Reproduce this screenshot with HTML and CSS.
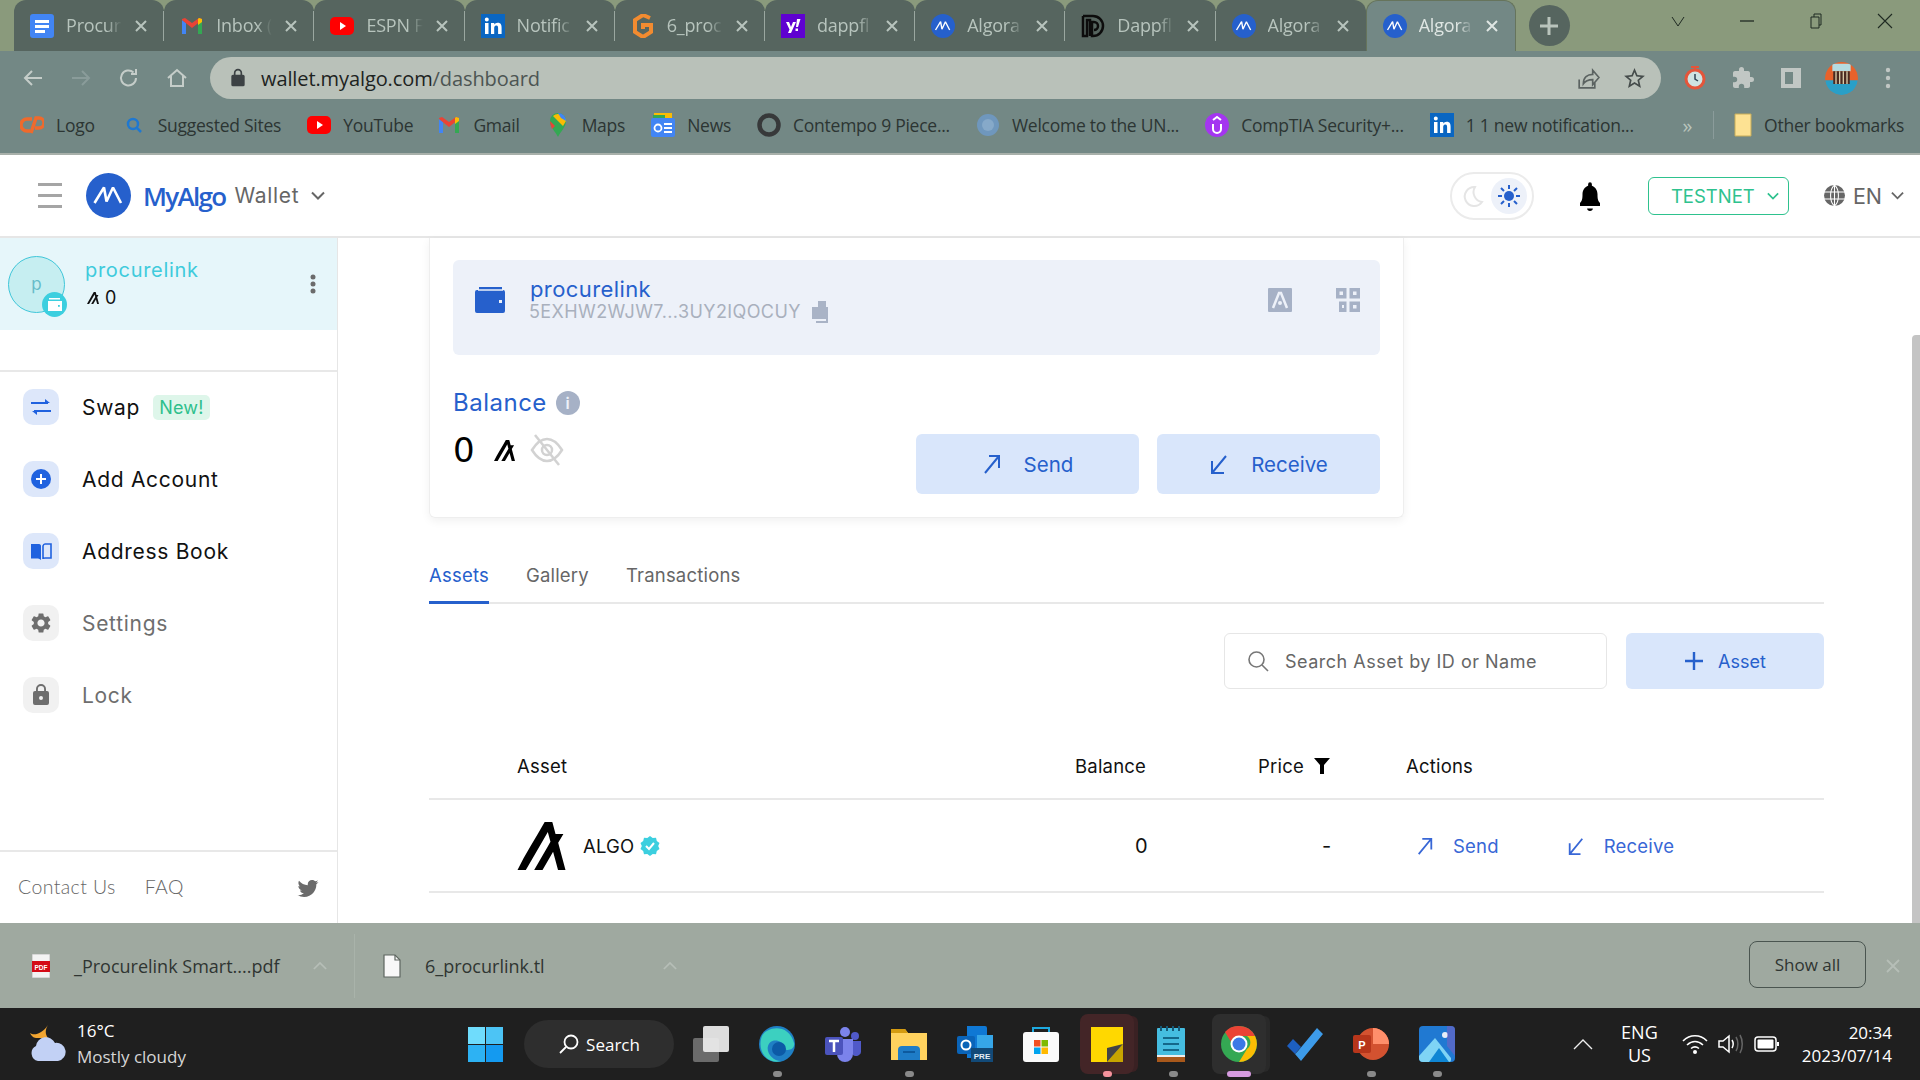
FILE: index.html
```html
<!DOCTYPE html>
<html lang="en">
<head>
<meta charset="utf-8">
<title>MyAlgo Wallet</title>
<link rel="stylesheet" href="styles.css">
</head>
<body>
<svg class="defs" width="0" height="0" aria-hidden="true">
  <symbol id="m" viewBox="0 0 45 45"><circle cx="22.5" cy="22.5" r="22.5" fill="#2660cc"/><path d="M8.500 30 18 14.500 20.500 28.500 27 14.500 35 30" fill="none" stroke="#fff" stroke-width="2.600" stroke-linejoin="bevel"/></symbol>
  <symbol id="algo" viewBox="0 0 113 113"><path d="M19.6 113 36 84.6 52.4 56.3 68.7 28l2.7-4.5L72.6 28l5 18.6-5.6 9.7-16.4 28.3L39.3 113h19.6l16.4-28.4 8.5-14.7 4 14.7L95.4 113H113l-7.6-28.4-7.6-28.3-2-7.3L108 28.1H89.5l-.6-2.1-6.4-24L81.7 0H64l-.4.6L47 29.3 30.2 57.9 13.9 86.2 0 113z" fill="currentColor"/></symbol>
  <symbol id="gmail" viewBox="0 0 24 24"><path d="M2 20V6l4 3v11z" fill="#4285f4"/><path d="M22 20V6l-4 3v11z" fill="#34a853"/><path d="M2 6 12 14 22 6v-1l-3-1-7 5-7-5-3 1z" fill="#ea4335"/><path d="M19 4l3 1v3l-4 3V5z" fill="#fbbc04"/></symbol>
  <symbol id="yt" viewBox="0 0 24 24"><rect y="3" width="24" height="18" rx="5" fill="#f00"/><path d="M10 8l6 4-6 4z" fill="#fff"/></symbol>
  <symbol id="li" viewBox="0 0 24 24"><rect width="24" height="24" fill="#0a66c2"/><path d="M4 9h3.5v11H4zM5.8 3.6a2 2 0 1 1 0 4 2 2 0 0 1 0-4zM10 9h3.3v1.6c.6-1 1.8-1.9 3.4-1.9 3.3 0 3.9 2.2 3.9 5V20h-3.5v-5.5c0-1.3 0-2.9-1.8-2.9s-2.1 1.4-2.1 2.8V20H10z" fill="#fff"/></symbol>
  <symbol id="close" viewBox="0 0 14 14"><path d="M2 2l10 10M12 2 2 12" fill="none" stroke="currentColor" stroke-width="2"/></symbol>
  <symbol id="chev" viewBox="0 0 14 9"><path d="M1 1.500l6 6 6-6" fill="none" stroke="currentColor" stroke-width="2"/></symbol>
  <symbol id="out" viewBox="0 0 20 22"><path d="M3 20 17 3M7 3h10v12" fill="none" stroke="currentColor" stroke-width="2"/></symbol>
  <symbol id="in" viewBox="0 0 20 22"><path d="M17 3 3 20M3 8v12h12" fill="none" stroke="currentColor" stroke-width="2"/></symbol>
</svg>

<div class="screen">
  <header class="tabstrip">
    <div class="tab"><svg class="fav" viewBox="0 0 24 24"><rect y="0" width="24" height="24" rx="3" fill="#4285f4"/><path d="M5 6h14v3H5zM5 11h14v3H5zM5 16h10v3H5z" fill="#fff"/></svg><span class="tab-title">Procur</span><svg class="tab-x"><use href="#close"/></svg></div>
    <div class="tab"><svg class="fav"><use href="#gmail"/></svg><span class="tab-title">Inbox (</span><svg class="tab-x"><use href="#close"/></svg></div>
    <div class="tab"><svg class="fav"><use href="#yt"/></svg><span class="tab-title">ESPN F</span><svg class="tab-x"><use href="#close"/></svg></div>
    <div class="tab"><svg class="fav"><use href="#li"/></svg><span class="tab-title">Notific</span><svg class="tab-x"><use href="#close"/></svg></div>
    <div class="tab"><svg class="fav" viewBox="0 0 24 24"><path d="M19 4 12 1 4 6v12l8 5 8-5v-7h-8v4" fill="none" stroke="#f28b30" stroke-width="4"/></svg><span class="tab-title">6_proc</span><svg class="tab-x"><use href="#close"/></svg></div>
    <div class="tab"><svg class="fav" viewBox="0 0 24 24"><rect width="24" height="24" fill="#5f01d1"/><path d="M5 8h3l2 5 2-5h3l-5 11H7l1.500-3.500zM16 5h3.500L17 13h-2zM14.500 14.500h2.500V17h-2.500z" fill="#fff"/></svg><span class="tab-title">dappfl</span><svg class="tab-x"><use href="#close"/></svg></div>
    <div class="tab"><svg class="fav"><use href="#m"/></svg><span class="tab-title">Algora</span><svg class="tab-x"><use href="#close"/></svg></div>
    <div class="tab"><svg class="fav" viewBox="0 0 24 24"><path d="M2 2h10a10 10 0 0 1 0 20h-1V8h2a4 4 0 0 1 0 8M2 2v20h4V6h3v16" fill="none" stroke="#0c0c0c" stroke-width="2.500"/></svg><span class="tab-title">Dappfl</span><svg class="tab-x"><use href="#close"/></svg></div>
    <div class="tab"><svg class="fav"><use href="#m"/></svg><span class="tab-title">Algora</span><svg class="tab-x"><use href="#close"/></svg></div>
    <div class="tab tab-active"><svg class="fav"><use href="#m"/></svg><span class="tab-title">Algora</span><svg class="tab-x"><use href="#close"/></svg></div>
    <div class="newtab"><svg width="20" height="20" viewBox="0 0 20 20"><path d="M10 1v18M1 10h18" stroke="#b9c4bc" stroke-width="3"/></svg></div>
    <div class="winctl">
      <svg class="wc" viewBox="0 0 16 16"><path d="M2 4l6 9 6-9" fill="none" stroke="#1f2a22" stroke-width="1"/></svg>
      <svg class="wc" viewBox="0 0 16 16"><path d="M1 8h14" stroke="#1f2a22" stroke-width="1.300"/></svg>
      <svg class="wc" viewBox="0 0 16 16"><path d="M3 4h8v11H3zM6 4V1h7v11h-2" fill="none" stroke="#1f2a22" stroke-width="1"/></svg>
      <svg class="wc" viewBox="0 0 16 16"><path d="M1 1l14 14M15 1 1 15" stroke="#1f2a22" stroke-width="1.100"/></svg>
    </div>
  </header>

  <div class="toolbar">
    <svg class="nav-ic" viewBox="0 0 24 24"><path d="M21 12H4M11 5l-7 7 7 7" fill="none" stroke="#c5cdc9" stroke-width="2"/></svg>
    <svg class="nav-ic" viewBox="0 0 24 24"><path d="M3 12h17M13 5l7 7-7 7" fill="none" stroke="#8a9c9a" stroke-width="2"/></svg>
    <svg class="nav-ic" viewBox="0 0 24 24"><path d="M19 12a7.500 7.500 0 1 1-2.500-5.600M19 3v5h-5" fill="none" stroke="#c5cdc9" stroke-width="2"/></svg>
    <svg class="nav-ic" viewBox="0 0 24 24"><path d="M3 12l9-8 9 8M6 10v10h12V10" fill="none" stroke="#c5cdc9" stroke-width="2"/></svg>
    <div class="omnibox">
      <svg class="lock" viewBox="0 0 24 24"><path d="M18 8h-1V6A5 5 0 0 0 7 6v2H6a2 2 0 0 0-2 2v10a2 2 0 0 0 2 2h12a2 2 0 0 0 2-2V10a2 2 0 0 0-2-2zM15 8H9V6a3 3 0 0 1 6 0z" fill="#3c4244"/></svg>
      <span class="url">wallet.myalgo.com<span class="url-path">/dashboard</span></span>
      <svg class="omni-ic" viewBox="0 0 24 24"><path d="M4 13v8h15v-5M8 17c0-6 4-9 9-9V4l6 7-6 7v-5c-4 0-7 1-9 4z" fill="none" stroke="#5b6361" stroke-width="1.600"/></svg>
      <svg class="omni-ic" viewBox="0 0 24 24"><path d="M22 9.240l-7.190-.620L12 2 9.190 8.630 2 9.240l5.460 4.730L5.820 21 12 17.270 18.180 21l-1.630-7.030L22 9.240zM12 15.400l-3.760 2.270 1-4.280-3.320-2.880 4.380-.380L12 6.100l1.710 4.040 4.380.380-3.320 2.880 1 4.280L12 15.400z" fill="#454c4b"/></svg>
    </div>
    <div class="ext-row">
      <svg class="ext" viewBox="0 0 24 24"><circle cx="12" cy="13" r="9" fill="#cfe3e2" stroke="#e4553a" stroke-width="3"/><path d="M12 1v3M8 1h8" stroke="#e4553a" stroke-width="2"/><path d="M12 8v5l3 2" fill="none" stroke="#345" stroke-width="1.500"/></svg>
      <svg class="ext" viewBox="0 0 24 24"><path d="M20.500 11H19V7c0-1.100-.9-2-2-2h-4V3.500a2.500 2.500 0 0 0-5 0V5H4c-1.100 0-2 .9-2 2v3.800h1.500a2.700 2.700 0 0 1 0 5.400H2V20c0 1.100.9 2 2 2h3.800v-1.500a2.700 2.700 0 0 1 5.400 0V22H17c1.100 0 2-.9 2-2v-4h1.500a2.500 2.500 0 0 0 0-5z" fill="#c1c7c4"/></svg>
      <svg class="ext" viewBox="0 0 24 24"><path d="M2 2h20v20H2zM6 6v12h8V6z" fill="#c1c7c4" fill-rule="evenodd"/></svg>
      <svg class="ext ext-avatar" viewBox="0 0 36 36"><rect width="36" height="36" fill="#e8622b"/><path d="M0 20h36v16H0z" fill="#2a9fc7"/><path d="M8 2h20v8H8z" fill="#b5dbe0"/><path d="M9 10h18v14H9z" fill="#4a2b22"/><path d="M12 10v14M16 10v14M20 10v14M24 10v14" stroke="#d8c9a6" stroke-width="1.500"/></svg>
      <svg class="ext ext-dots" viewBox="0 0 6 24"><circle cx="3" cy="4" r="2.200" fill="#c1c7c4"/><circle cx="3" cy="12" r="2.200" fill="#c1c7c4"/><circle cx="3" cy="20" r="2.200" fill="#c1c7c4"/></svg>
    </div>
  </div>

  <div class="bookmarks">
    <div class="bm"><svg class="bm-ic" viewBox="0 0 24 24"><path d="M12 6H7a6 6 0 0 0 0 12h3M11 20 16 5h3a5 5 0 0 1 0 10h-4" fill="none" stroke="#ef6a2c" stroke-width="3.500"/></svg><span>Logo</span></div>
    <div class="bm bm-sug"><svg class="bm-ic bm-sm" viewBox="0 0 16 16"><circle cx="7" cy="7" r="5" fill="none" stroke="#1f78d1" stroke-width="2.500"/><path d="M10.500 10.500 15 15" stroke="#1f78d1" stroke-width="2.500"/></svg><span>Suggested Sites</span></div>
    <div class="bm"><svg class="bm-ic"><use href="#yt"/></svg><span>YouTube</span></div>
    <div class="bm bm-gm"><svg class="bm-ic"><use href="#gmail"/></svg><span>Gmail</span></div>
    <div class="bm"><svg class="bm-ic" viewBox="0 0 24 24"><path d="M12 24C9 18 4 14 4 8a8 8 0 0 1 16 0c0 6-5 10-8 16z" fill="#34a853"/><path d="M7 3 17 13l3-5a8 8 0 0 0-13-5z" fill="#fbbc04"/><path d="M12 0a8 8 0 0 1 8 8l-5-3z" fill="#4285f4"/><path d="M4 8l5 5-3 3C5 13 4 10 4 8z" fill="#ea4335"/></svg><span>Maps</span></div>
    <div class="bm"><svg class="bm-ic" viewBox="0 0 24 24"><path d="M3 0h18v6H3z" fill="#fbbc04"/><path d="M2 2h12v6H2z" fill="#34a853"/><rect y="5" width="24" height="19" rx="2" fill="#4285f4"/><path d="M13 10h8v2h-8zM13 14h8v2h-8zM13 18h8v2h-8z" fill="#fff"/><circle cx="7" cy="15" r="3.500" fill="none" stroke="#fff" stroke-width="1.800"/></svg><span>News</span></div>
    <div class="bm"><svg class="bm-ic" viewBox="0 0 24 24"><circle cx="12" cy="12" r="9.500" fill="none" stroke="#37393a" stroke-width="4.500"/></svg><span>Contempo 9 Piece...</span></div>
    <div class="bm"><svg class="bm-ic" viewBox="0 0 24 24"><circle cx="12" cy="12" r="11" fill="#6f97bd"/><circle cx="12" cy="12" r="6" fill="#86a9c9"/></svg><span>Welcome to the UN...</span></div>
    <div class="bm"><svg class="bm-ic" viewBox="0 0 24 24"><circle cx="12" cy="12" r="12" fill="#a435f0"/><path d="M8 11v5a4 4 0 0 0 8 0v-5M8 7l4-3 4 3" fill="none" stroke="#fff" stroke-width="2"/></svg><span>CompTIA Security+...</span></div>
    <div class="bm"><svg class="bm-ic"><use href="#li"/></svg><span>1 1 new notification...</span></div>
    <span class="bm-more">»</span>
    <div class="bm bm-other"><svg class="bm-ic" viewBox="0 0 18 24"><path d="M1 1h16v22H1z" fill="#fde293" stroke="#c9ad58"/></svg><span>Other bookmarks</span></div>
  </div>

  <div class="appbar">
    <div class="hamb"><i></i><i></i><i></i></div>
    <svg class="logo"><use href="#m"/></svg>
    <span class="brand">MyAlgo</span>
    <span class="brand-sub">Wallet</span>
    <svg class="brand-chev"><use href="#chev"/></svg>
    <div class="appbar-right">
      <div class="toggle">
        <svg class="moon" viewBox="0 0 24 24"><path d="M14 3a9.500 9.500 0 1 0 7 15A10 10 0 0 1 14 3z" fill="none" stroke="#e5e5e5" stroke-width="2"/></svg>
        <span class="sun"><svg width="24" height="26" viewBox="0 0 24 24"><circle cx="12" cy="12" r="5" fill="#2660cc"/><path d="M12 1v4M12 19v4M1 12h4M19 12h4M4 4l3 3M17 17l3 3M20 4l-3 3M7 17l-3 3" stroke="#2660cc" stroke-width="2"/></svg></span>
      </div>
      <svg class="bell" viewBox="0 0 24 24"><path d="M12 24c1.300 0 2.300-.9 2.300-2h-4.600c0 1.100 1 2 2.300 2zm8-6.500c-1.500-1.500-2-3-2-7 0-3.500-2-6-4.500-6.800V2.500a1.500 1.500 0 0 0-3 0v1.200C8 4.500 6 7 6 10.500c0 4-.5 5.500-2 7V20h16z"/></svg>
      <div class="netbtn"><span>TESTNET</span><svg class="net-chev"><use href="#chev"/></svg></div>
      <div class="lang">
        <svg class="globe" viewBox="0 0 24 24"><circle cx="12" cy="12" r="12" fill="#666"/><path d="M0 8h24M0 16h24M12 0v24M12 0C6 5 6 19 12 24M12 0c6 5 6 19 0 24" fill="none" stroke="#fff" stroke-width="1.200"/></svg>
        <span>EN</span>
        <svg class="lang-chev"><use href="#chev"/></svg>
      </div>
    </div>
  </div>

  <div class="body">
    <aside class="sidebar">
      <div class="account">
        <div class="avatar">p
          <span class="avatar-badge"><svg width="15" height="13" viewBox="0 0 15 13"><path d="M2 0h11v1.500H2zM1 3h14v10H1z" fill="#fff"/><rect x="11" y="7" width="1.800" height="1.800" fill="#3ccfdf"/></svg></span>
        </div>
        <div class="acct-text">
          <div class="acct-name">procurelink</div>
          <div class="acct-bal"><svg class="acct-algo"><use href="#algo"/></svg><span>0</span></div>
        </div>
        <svg class="acct-more" viewBox="0 0 6 20"><circle cx="3" cy="3" r="2.500" fill="#6b6b6b"/><circle cx="3" cy="10" r="2.500" fill="#6b6b6b"/><circle cx="3" cy="17" r="2.500" fill="#6b6b6b"/></svg>
      </div>
      <nav class="navlist">
        <div class="nav-item"><span class="nav-box"><svg width="20" height="16" viewBox="0 0 20 16"><path d="M0 4h17M20 12H3" fill="none" stroke="#2062df" stroke-width="2"/><path d="M14 0l5 4-5 0zM6 16l-5-4 5 0z" fill="#2062df"/></svg></span><span>Swap</span><span class="new">New!</span></div>
        <div class="nav-item"><span class="nav-box"><svg width="20" height="20" viewBox="0 0 20 20"><circle cx="10" cy="10" r="10" fill="#2062df"/><path d="M10 5v10M5 10h10" stroke="#fff" stroke-width="2"/></svg></span><span>Add Account</span></div>
        <div class="nav-item"><span class="nav-box"><svg width="22" height="17" viewBox="0 0 22 17"><path d="M1 1h8c1.500 0 2 1 2 2v14c-1-1-2-1.500-3-1.500H1z" fill="#2062df"/><path d="M13 3c.3-1 1-2 2-2h6v14h-6c-1 0-2 .5-2 1z" fill="none" stroke="#2062df" stroke-width="1.600"/></svg></span><span>Address Book</span></div>
        <div class="nav-item nav-muted"><span class="nav-box"><svg width="24" height="24" viewBox="0 0 24 24"><path d="M19.140 12.940c.04-.3.06-.61.06-.94 0-.32-.02-.64-.07-.94l2.030-1.580a.49.49 0 0 0 .12-.61l-1.920-3.320a.488.488 0 0 0-.59-.22l-2.390.96c-.5-.38-1.030-.7-1.620-.94l-.36-2.540a.484.484 0 0 0-.48-.41h-3.840c-.24 0-.43.17-.47.41l-.36 2.540c-.59.24-1.130.57-1.620.94l-2.390-.96c-.22-.08-.47 0-.59.22L2.740 8.870c-.12.21-.08.47.12.61l2.030 1.580c-.05.3-.09.63-.09.94s.02.64.07.94l-2.030 1.580a.49.49 0 0 0-.12.61l1.920 3.320c.12.22.37.29.59.22l2.390-.96c.5.38 1.030.7 1.620.94l.36 2.540c.05.24.24.41.48.41h3.840c.24 0 .44-.17.47-.41l.36-2.540c.59-.24 1.130-.56 1.620-.94l2.390.96c.22.08.47 0 .59-.22l1.920-3.320c.12-.22.07-.47-.12-.61l-2.010-1.580zM12 15.600c-1.980 0-3.600-1.620-3.600-3.600s1.620-3.600 3.600-3.600 3.600 1.620 3.600 3.600-1.620 3.600-3.600 3.600z" fill="#6e6e6e"/></svg></span><span>Settings</span></div>
        <div class="nav-item nav-muted"><span class="nav-box"><svg width="24" height="26" viewBox="0 0 24 24"><path d="M18 8h-1V6A5 5 0 0 0 7 6v2H6a2 2 0 0 0-2 2v10a2 2 0 0 0 2 2h12a2 2 0 0 0 2-2V10a2 2 0 0 0-2-2zm-6 9a2 2 0 1 1 0-4 2 2 0 0 1 0 4zm3.100-9H8.900V6a3.100 3.100 0 0 1 6.200 0z" fill="#6e6e6e"/></svg></span><span>Lock</span></div>
      </nav>
      <div class="side-foot">
        <span>Contact Us</span><span>FAQ</span>
        <svg class="tw" viewBox="0 0 24 24"><path d="M22.460 6c-.77.35-1.600.58-2.460.69.88-.53 1.560-1.370 1.880-2.380-.83.5-1.750.85-2.720 1.050C18.370 4.500 17.260 4 16 4c-2.350 0-4.270 1.920-4.270 4.290 0 .34.04.67.11.98C8.280 9.090 5.110 7.380 3 4.790c-.37.63-.58 1.370-.58 2.150 0 1.490.75 2.810 1.910 3.560-.71 0-1.370-.2-1.950-.5v.03c0 2.080 1.480 3.820 3.440 4.210a4.220 4.220 0 0 1-1.930.07 4.280 4.280 0 0 0 4 2.980 8.521 8.521 0 0 1-5.330 1.840c-.34 0-.68-.02-1.020-.06C3.440 20.290 5.700 21 8.120 21 16 21 20.330 14.460 20.330 8.790c0-.19 0-.37-.01-.56.84-.6 1.560-1.360 2.140-2.230z" fill="#6b6b6b"/></svg>
      </div>
    </aside>

    <main class="content">
      <section class="card">
        <div class="wallet-panel">
          <svg class="wallet-ic" viewBox="0 0 30 26"><path d="M4 0h23v3H4zM0 5a2 2 0 0 1 2-2h26a2 2 0 0 1 2 2v19a2 2 0 0 1-2 2H2a2 2 0 0 1-2-2z" fill="#2660cc"/><path d="M3 3h25" stroke="#edf1f9" stroke-width="1.500"/><rect x="24" y="13" width="3" height="3" fill="#edf1f9"/></svg>
          <div class="wallet-text">
            <div class="wallet-name">procurelink</div>
            <div class="wallet-addr"><span>5EXHW2WJW7...3UY2IQOCUY</span><svg class="copy" viewBox="0 0 20 22"><path d="M8 0v6H2v12h14V0z" fill="#a9b3c6"/><path d="M18 6v16H6v-2h10V6z" fill="#a9b3c6"/></svg></div>
          </div>
          <svg class="wallet-act wallet-a" viewBox="0 0 24 24"><rect width="24" height="24" rx="1" fill="#a6b1c6"/><path d="M5 20 11 5h2l6 15" fill="none" stroke="#edf1f9" stroke-width="2.500"/><circle cx="12" cy="15" r="2" fill="#edf1f9"/></svg>
          <svg class="wallet-act" viewBox="0 0 24 24"><path d="M0 0h10.500v10.500H0zM13.500 0H24v10.500H13.500zM13.500 13.500H24V24H13.500zM3 13.500h7.500V24H3z" fill="#a6b1c6"/><path d="M3.500 3.500h3.500V7H3.500zM17 3.500h3.500V7H17zM17 17h3.500v3.500H17zM6 17h2v3H6z" fill="#edf1f9"/></svg>
        </div>
        <div class="balance-row">
          <div class="balance-left">
            <div class="balance-title"><span>Balance</span><span class="info">i</span></div>
            <div class="balance-val"><span class="zero">0</span><svg class="bal-algo"><use href="#algo"/></svg><svg class="eye" viewBox="0 0 34 32"><path d="M2 16C7 8 12 5 17 5s10 3 15 11c-5 8-10 11-15 11S7 24 2 16z" fill="none" stroke="#d2d2d2" stroke-width="2.500"/><circle cx="17" cy="16" r="5" fill="none" stroke="#d2d2d2" stroke-width="2.500"/><path d="M5 1l24 30" stroke="#d2d2d2" stroke-width="2.500"/></svg></div>
          </div>
          <div class="balance-btns">
            <div class="btn"><svg class="btn-arrow"><use href="#out"/></svg><span>Send</span></div>
            <div class="btn"><svg class="btn-arrow"><use href="#in"/></svg><span>Receive</span></div>
          </div>
        </div>
      </section>

      <div class="tabs">
        <span class="tabs-item tabs-on">Assets</span>
        <span class="tabs-item">Gallery</span>
        <span class="tabs-item">Transactions</span>
      </div>

      <div class="search-row">
        <div class="search"><svg class="search-ic" viewBox="0 0 22 22"><circle cx="9.500" cy="9.500" r="7.500" fill="none" stroke="#777" stroke-width="1.600"/><path d="M15 15l6 6" stroke="#777" stroke-width="1.600"/></svg><span>Search Asset by ID or Name</span></div>
        <div class="add-asset"><svg width="20" height="20" viewBox="0 0 20 20"><path d="M10 1v18M1 10h18" stroke="#2660cc" stroke-width="2.400"/></svg><span>Asset</span></div>
      </div>

      <div class="table">
        <div class="t-row t-head">
          <span class="c-asset">Asset</span>
          <span class="c-bal">Balance</span>
          <span class="c-price">Price<svg class="funnel" viewBox="0 0 16 16"><path d="M0 0h16l-6 7v9H6V7z"/></svg></span>
          <span class="c-act">Actions</span>
        </div>
        <div class="t-row t-body">
          <span class="c-asset"><svg class="asset-logo"><use href="#algo"/></svg><span class="asset-name">ALGO</span><svg class="verified" viewBox="0 0 20 20"><path d="M10 0l2.700 2 3.300-.2.8 3.300 2.700 2L18.200 10l1.300 2.900-2.700 2-.8 3.300-3.300-.2L10 20l-2.700-2-3.300.2-.8-3.300-2.700-2L1.800 10 .5 7.100l2.700-2L4 1.800l3.300.2z" fill="#3ccfdf"/><path d="M6 10l3 3 5-6" fill="none" stroke="#fff" stroke-width="2"/></svg></span>
          <span class="c-bal c-num">0</span>
          <span class="c-price c-dash">-</span>
          <span class="c-act c-links">
            <span class="link link-send"><svg class="link-arrow"><use href="#out"/></svg>Send</span>
            <span class="link"><svg class="link-arrow"><use href="#in"/></svg>Receive</span>
          </span>
        </div>
      </div>
    </main>
    <div class="scrolltrack"><div class="scrollthumb"></div></div>
  </div>

  <div class="downloads">
    <div class="dl dl-first"><svg class="dl-ic" viewBox="0 0 18 24"><path d="M0 0h18v24H0z" fill="#f3f3f3" stroke="#bbb"/><path d="M0 7h18v11H0z" fill="#d40b16"/><text x="9" y="15.500" class="pdf-label" text-anchor="middle">PDF</text></svg><span class="dl-name">_Procurelink Smart....pdf</span><svg class="dl-up" viewBox="0 0 16 10"><path d="M1 9l7-7 7 7" fill="none" stroke="#b6beb7" stroke-width="2"/></svg></div>
    <div class="dl dl-second"><svg class="dl-ic" viewBox="0 0 18 24"><path d="M1 1h11l5 5v17H1z" fill="#f8f8f8" stroke="#5e6660" stroke-width="1.200"/><path d="M12 1v5h5" fill="none" stroke="#5e6660" stroke-width="1.200"/></svg><span class="dl-name">6_procurlink.tl</span><svg class="dl-up" viewBox="0 0 16 10"><path d="M1 9l7-7 7 7" fill="none" stroke="#b6beb7" stroke-width="2"/></svg></div>
    <div class="showall">Show all</div>
    <svg class="dl-x" viewBox="0 0 14 14"><path d="M1 1l12 12M13 1 1 13" stroke="#b6beb7" stroke-width="1.800"/></svg>
  </div>

  <footer class="taskbar">
    <div class="weather">
      <svg class="wx" viewBox="0 0 36 38"><path d="M18 0c-3 5-3 9 0 13l-12 0c-3 0-5-3-6-5 4 3 12 1 18-8z" fill="#f2a531"/><path d="M8 36a8 8 0 0 1-2-15 10 10 0 0 1 19-3 9 9 0 0 1 3 18z" fill="#c2d1f5"/></svg>
      <div class="wx-text"><div>16°C</div><div class="wx-sub">Mostly cloudy</div></div>
    </div>
    <div class="tb-center">
      <svg class="start" viewBox="0 0 35 35"><path d="M0 0h17v17H0z" fill="#6fdcfc"/><path d="M18 0h17v17H18z" fill="#4cc4f5"/><path d="M0 18h17v17H0z" fill="#2db2f3"/><path d="M18 18h17v17H18z" fill="#149af0"/></svg>
      <div class="tb-search"><svg width="22" height="22" viewBox="0 0 22 22"><circle cx="13" cy="9" r="6.500" fill="none" stroke="#fff" stroke-width="1.800"/><path d="M8 14l-6 6" stroke="#fff" stroke-width="1.800"/></svg><span>Search</span></div>
      <div class="tb-apps">
        <div class="app"><svg class="app-ic" viewBox="0 0 36 36"><rect x="0" y="12" width="26" height="24" rx="2" fill="#6b6b6b"/><rect x="10" y="0" width="26" height="26" rx="2" fill="#eee" opacity=".92"/></svg></div>
        <div class="app"><svg class="app-ic" viewBox="0 0 36 36"><circle cx="18" cy="18" r="18" fill="#1f7fc4"/><path d="M3 10C8 0 30-3 35 17c1 7-6 8-11 6 3-8-12-13-15-3-2 7 5 15 13 15C10 39-3 26 3 10z" fill="#3cd0c0"/><circle cx="20" cy="23" r="7" fill="#0c5aa6"/></svg><i class="dot"></i></div>
        <div class="app"><svg class="app-ic" viewBox="0 0 36 36"><circle cx="20" cy="6" r="5" fill="#7b83eb"/><circle cx="30" cy="10" r="4" fill="#5059c9"/><path d="M12 13h16v15a8 8 0 0 1-16 0z" fill="#7b83eb"/><path d="M28 15h8v11a5 5 0 0 1-8 3z" fill="#5059c9"/><rect y="11" width="18" height="18" rx="2" fill="#4b53bc"/><path d="M4 15h10M9 15v11" stroke="#fff" stroke-width="2.500"/></svg></div>
        <div class="app"><svg class="app-ic" viewBox="0 0 36 36"><path d="M0 3h14l3 4h19v27H0z" fill="#ffd25e"/><path d="M0 3h14l3 4H0z" fill="#d49b11"/><path d="M7 34V24a4 4 0 0 1 4-4h14a4 4 0 0 1 4 4v10z" fill="#1e7cc7"/><path d="M12 26h12" stroke="#0d5a9e" stroke-width="2"/></svg><i class="dot"></i></div>
        <div class="app"><svg class="app-ic" viewBox="0 0 36 36"><path d="M10 0h18a2 2 0 0 1 2 2v30H10z" fill="#0f78d4"/><path d="M20 9h16v16H20z" fill="#36a6e8"/><rect y="10" width="18" height="18" rx="2" fill="#0a64b8"/><circle cx="9" cy="19" r="4.500" fill="none" stroke="#fff" stroke-width="2"/><rect x="14" y="22" width="22" height="14" fill="#124a78"/><text x="25" y="33" class="pre-label" text-anchor="middle">PRE</text></svg></div>
        <div class="app"><svg class="app-ic" viewBox="0 0 36 36"><path d="M10 7V2h16v5" fill="none" stroke="#1da9e0" stroke-width="2"/><rect y="6" width="36" height="30" rx="3" fill="#fafafa"/><path d="M11 14h6.500v6.500H11z" fill="#f25022"/><path d="M18.500 14H25v6.500h-6.500z" fill="#7fba00"/><path d="M11 21.500h6.500V28H11z" fill="#00a4ef"/><path d="M18.500 21.500H25V28h-6.500z" fill="#ffb900"/></svg></div>
        <div class="app app-sticky"><svg class="app-ic" viewBox="0 0 36 36"><path d="M2 1h32v35H2z" fill="#ffd800"/><path d="M34 36H18l16-18z" fill="#c7a400"/><path d="M18 36V22l16-4z" fill="#444"/></svg><i class="dot dot-pink"></i></div>
        <div class="app"><svg class="app-ic" viewBox="0 0 32 36"><rect y="2" width="28" height="34" rx="1" fill="#45bde0"/><path d="M0 30h28v6H0z" fill="#a8581b"/><path d="M0 29h28v2H0z" fill="#eee"/><path d="M6 12h16M6 18h16M6 24h16" stroke="#14688a" stroke-width="2"/><path d="M4 0v5M10 0v5M16 0v5M22 0v5" stroke="#155a78" stroke-width="2"/></svg><i class="dot"></i></div>
        <div class="app app-chrome"><svg class="app-ic" viewBox="0 0 36 36"><circle cx="18" cy="18" r="18" fill="#34a853"/><path d="M18 0a18 18 0 0 1 16 10H18a8 8 0 0 0-8 6L4 6a18 18 0 0 1 14-6z" fill="#ea4335"/><path d="M34 10a18 18 0 0 1-16 26l8-13a8 8 0 0 0 0-13z" fill="#fbbc04"/><circle cx="18" cy="18" r="8.500" fill="#fff"/><circle cx="18" cy="18" r="6.500" fill="#3b78e7"/></svg><i class="dot dot-wide"></i></div>
        <div class="app"><svg class="app-ic" viewBox="0 0 36 36"><path d="M0 20l6-7 8 8-6 7z" fill="#1d5fc0"/><path d="M14 35 36 8l-6-6-19 23-3 3z" fill="#3d9be9"/></svg></div>
        <div class="app"><svg class="app-ic" viewBox="0 0 36 36"><circle cx="20" cy="18" r="16" fill="#d35230"/><path d="M20 2a16 16 0 0 1 16 16H20z" fill="#ff8f6b"/><rect y="9" width="18" height="18" rx="2" fill="#b7361b"/><text x="9" y="23" class="ppt-label" text-anchor="middle">P</text></svg><i class="dot"></i></div>
        <div class="app"><svg class="app-ic" viewBox="0 0 36 36"><rect width="36" height="36" rx="4" fill="#2079d2"/><path d="M0 30 16 12l16 20v2a2 2 0 0 1-2 2H4a4 4 0 0 1-4-4z" fill="#7fd4f5"/><path d="M10 36 20 22l10 14z" fill="#0f86d4"/><circle cx="26" cy="9" r="3" fill="#e8eef8"/><path d="M28 0h4a4 4 0 0 1 4 4v26L28 20z" fill="#7b5fc0" opacity=".55"/></svg><i class="dot"></i></div>
      </div>
    </div>
    <div class="tray">
      <svg class="tray-caret" viewBox="0 0 20 12"><path d="M1 11l9-9 9 9" fill="none" stroke="#eee" stroke-width="1.400"/></svg>
      <div class="lang-box"><div>ENG</div><div>US</div></div>
      <svg class="tray-ic" viewBox="0 0 26 20"><path d="M1 7c7-7 17-7 24 0M5 11c5-4.500 11-4.500 16 0M9 14.500c2.500-2 5.500-2 8 0" fill="none" stroke="#fff" stroke-width="1.600"/><circle cx="13" cy="18" r="2" fill="#fff"/></svg>
      <svg class="tray-ic" viewBox="0 0 26 20"><path d="M1 7h4l6-5v16l-6-5H1z" fill="none" stroke="#fff" stroke-width="1.500"/><path d="M14 6c1.500 2.500 1.500 5.500 0 8" fill="none" stroke="#fff" stroke-width="1.500"/><path d="M18 3c2.500 4 2.500 10 0 14M22 1c3 5 3 13 0 18" fill="none" stroke="#666" stroke-width="1.500"/></svg>
      <svg class="tray-ic" viewBox="0 0 26 20"><rect x="1" y="3" width="21" height="14" rx="3" fill="none" stroke="#fff" stroke-width="1.500"/><rect x="3.500" y="5.500" width="16" height="9" rx="1" fill="#fff"/><path d="M23 8h2v4h-2z" fill="#fff"/></svg>
      <div class="clock"><div>20:34</div><div>2023/07/14</div></div>
    </div>
  </footer>
</div>
</body>
</html>
```

FILE: styles.css
```css
* { box-sizing: border-box; }
html, body { margin: 0; padding: 0; }
body { font-family: "Inter", "Liberation Sans", sans-serif; background: #fff; overflow: hidden; }
.defs { position: absolute; }
svg { display: block; flex: none; }
.screen { width: 1920px; height: 1080px; display: flex; flex-direction: column; overflow: hidden; }

/* tab strip */
.tabstrip { height: 51px; background: #8a9a7c; display: flex; padding-left: 14px; flex: none; font-family: "Open Sans", sans-serif; }
.tab { width: 150.2px; height: 51px; background: #56655f; display: flex; align-items: center; padding: 0 16px; gap: 12px; color: #b7c4bd; border-radius: 12px 12px 0 0; position: relative; }
.tab::after { content: ""; position: absolute; right: 0; top: 11px; height: 30px; width: 1px; background: #9aa7a0; }
.tab:nth-child(9)::after, .tab-active::after { display: none; }
.tab-active { background: #738885; color: #dfe6e3; border: 1px solid #66745c; border-bottom: none; }
.fav { width: 24px; height: 24px; }
.tab-title { flex: 1; min-width: 0; white-space: nowrap; font-size: 18px; letter-spacing: -.2px; margin-top: -2px; -webkit-mask-image: linear-gradient(90deg, #000 72%, transparent 100%); mask-image: linear-gradient(90deg, #000 72%, transparent 100%); }
.tab-x { width: 14px; height: 14px; }
.newtab { width: 41px; height: 41px; border-radius: 50%; background: #56655f; margin: 5px 0 0 13px; display: flex; align-items: center; justify-content: center; }
.winctl { margin-left: auto; display: flex; align-items: center; gap: 53px; padding: 0 27px 4px 0; height: 46px; }
.wc { width: 16px; height: 16px; }

/* toolbar */
.toolbar { height: 48px; background: #738885; display: flex; align-items: center; padding: 6px 0 0 21px; flex: none; }
.nav-ic { width: 24px; height: 24px; margin-right: 24px; }
.omnibox { width: 1451px; height: 42px; margin-left: -3px; background: #b9c1b9; border-radius: 21px; display: flex; align-items: center; padding: 0 14px 0 18px; }
.lock { width: 20px; height: 20px; }
.url { margin-left: 13px; font: 20px "Open Sans", sans-serif; color: #1d2321; flex: 1; letter-spacing: -.1px; }
.url-path { color: #4d5553; }
.omni-ic { width: 25px; height: 25px; margin-left: 22px; }
.ext-row { display: flex; align-items: center; margin-left: 22px; gap: 24px; }
.ext { width: 24px; height: 24px; }
.ext-avatar { width: 33px; height: 33px; border-radius: 50%; margin-left: -2px; }
.ext-dots { width: 6px; margin-left: 3px; }

/* bookmarks */
.bookmarks { height: 54px; background: #738885; display: flex; align-items: center; padding: 0 16px 2px 20px; gap: 26px; font: 17.500px "Open Sans", sans-serif; color: #2c3533; flex: none; letter-spacing: -.25px; }
.bm { display: flex; align-items: center; gap: 12px; white-space: nowrap; }
.bm-sug { margin-left: 5px; }
.bm-gm { margin-left: -2px; }
.bm-ic { width: 24px; height: 24px; }
.bm-sm { width: 16px; height: 16px; margin-right: 4px; }
.bm-more { margin-left: auto; color: #b9c4bc; font-size: 20px; }
.bm-other { border-left: 1px solid #8b9c9b; padding-left: 20px; margin-left: -5px; height: 28px; }
.bm-other .bm-ic { width: 18px; }

/* app bar */
.appbar { height: 85px; border-top: 2px solid #a8b0aa; border-bottom: 2px solid #e6e6e6; background: #fff; display: flex; align-items: center; padding: 0 16px 0 38px; flex: none; }
.hamb { width: 24px; display: flex; flex-direction: column; gap: 8px; margin-right: 24px; }
.hamb i { height: 3px; background: #a5a5a5; display: block; }
.logo { width: 45px; height: 45px; }
.brand { margin-left: 12px; font: 600 26px "Open Sans", sans-serif; letter-spacing: -1.700px; color: #2660cc; }
.brand-sub { margin-left: 9px; font-size: 21px; letter-spacing: .7px; color: #666; }
.brand-chev { width: 14px; height: 9px; margin-left: 12px; color: #666; }
.appbar-right { margin-left: auto; display: flex; align-items: center; }
.toggle { width: 84px; height: 48px; border: 2px solid #ebebeb; border-radius: 24px; display: flex; align-items: center; justify-content: flex-end; padding-right: 5px; gap: 6px; }
.moon { width: 24px; height: 24px; }
.sun { width: 36px; height: 36px; border-radius: 50%; background: #edf1f9; display: flex; align-items: center; justify-content: center; }
.bell { width: 30px; height: 38px; margin-left: 41px; }
.netbtn { width: 141px; height: 38px; margin-left: 43px; border: 1.500px solid #2ec28e; border-radius: 6px; color: #2ec28e; font-size: 18.500px; display: flex; align-items: center; padding-left: 22px; }
.net-chev { width: 12px; height: 8px; margin-left: auto; margin-right: 9px; }
.lang { display: flex; align-items: center; margin-left: 35px; color: #666; font-size: 21.500px; }
.globe { width: 21px; height: 21px; margin-right: 8px; }
.lang-chev { width: 13px; height: 9px; margin-left: 9px; }

/* body */
.body { flex: 1; min-height: 0; display: flex; }
.sidebar { width: 338px; border-right: 1px solid #e6e6e6; display: flex; flex-direction: column; flex: none; }
.account { height: 92px; background: #e6f6fa; display: flex; align-items: center; padding-left: 8px; flex: none; }
.avatar { width: 57px; height: 57px; border-radius: 50%; background: #c6eef1; border: 1px solid #3fc6d9; color: #67bcc9; font-size: 17px; display: flex; align-items: center; justify-content: center; position: relative; }
.avatar-badge { position: absolute; right: -3px; bottom: -5px; width: 25px; height: 25px; border-radius: 50%; background: #3ccfdf; display: flex; align-items: center; justify-content: center; }
.acct-text { margin-left: 20px; flex: 1; }
.acct-name { font-size: 20px; letter-spacing: .7px; color: #3fcbdc; line-height: 26px; }
.acct-bal { display: flex; align-items: center; gap: 6px; font-size: 18px; line-height: 26px; margin-top: 2px; color: #111; padding-left: 2px; }
.acct-algo { width: 12px; height: 12px; color: #111; }
.acct-more { width: 6px; height: 20px; margin-right: 21px; }
.navlist { margin-top: 40px; padding-top: 17px; border-top: 2px solid #e8e8e8; display: flex; flex-direction: column; gap: 36px; }
.nav-item { display: flex; align-items: center; height: 36px; padding-left: 23px; font-size: 21px; letter-spacing: .7px; color: #111; }
.nav-muted { color: #6e6e6e; }
.nav-box { width: 36px; height: 36px; border-radius: 10px; background: #dde7fa; display: flex; align-items: center; justify-content: center; margin-right: 23px; }
.nav-muted .nav-box { background: #f1f1f1; }
.new { margin-left: 13px; height: 25px; padding: 0 6px; border-radius: 5px; background: #def6ea; color: #2ebf8c; font-size: 18px; letter-spacing: .2px; line-height: 25px; }
.side-foot { margin-top: auto; height: 73px; border-top: 2px solid #e8e8e8; display: flex; align-items: center; padding: 0 18px 3px; gap: 29px; font: 300 19.500px "Lato", sans-serif; color: #666; letter-spacing: .4px; }
.tw { width: 24px; height: 24px; margin: 3px -1px 0 auto; }

/* content */
.content { flex: 1; min-width: 0; padding: 0 88px 0 91px; }
.card { width: 975px; height: 280px; padding: 22px 23px 0; border: 1px solid #eee; border-top: none; border-radius: 0 0 6px 6px; box-shadow: 0 3px 10px rgba(0,0,0,.06); }
.wallet-panel { height: 95px; background: #edf1f9; border-radius: 6px; display: flex; align-items: flex-start; padding: 27px 20px 0 22px; }
.wallet-ic { width: 30px; height: 26px; }
.wallet-text { margin-left: 25px; flex: 1; margin-top: -10px; }
.wallet-name { font-size: 22px; line-height: 24px; letter-spacing: .4px; color: #2660cc; }
.wallet-addr { display: flex; align-items: center; gap: 9px; font-size: 18px; line-height: 22px; color: #a9b0bd; letter-spacing: .4px; margin-left: -1px; }
.copy { width: 20px; height: 22px; }
.wallet-act { width: 24px; height: 24px; margin-top: 1px; }
.wallet-a { margin-right: 44px; }
.balance-row { display: flex; justify-content: space-between; margin-top: 33px; }
.balance-title { display: flex; align-items: center; gap: 9px; font-size: 24px; letter-spacing: .5px; line-height: 30px; color: #2660cc; }
.info { width: 24px; height: 24px; border-radius: 50%; background: #a6b1c6; color: #edf1f9; font-size: 16px; font-weight: 600; display: flex; align-items: center; justify-content: center; }
.balance-val { display: flex; align-items: center; margin-top: 14px; }
.zero { font: 34px/36px "DejaVu Sans", sans-serif; color: #000; width: 41px; }
.bal-algo { width: 21px; height: 23px; color: #000; }
.eye { width: 34px; height: 32px; margin-left: 15px; }
.balance-btns { display: flex; gap: 18px; margin-top: 46px; }
.btn { width: 223px; height: 60px; background: #d9e6fb; border-radius: 6px; display: flex; align-items: center; justify-content: center; gap: 22px; color: #2660cc; font-size: 20.500px; }
.btn-arrow { width: 20px; height: 22px; }
.tabs { margin-top: 40px; height: 46px; border-bottom: 2px solid #e8e8e8; display: flex; gap: 37px; font-size: 18.500px; letter-spacing: .2px; color: #666; }
.tabs-item { height: 46px; line-height: 34px; }
.tabs-on { color: #2660cc; border-bottom: 3px solid #2660cc; }
.search-row { display: flex; justify-content: flex-end; gap: 19px; margin-top: 29px; }
.search { width: 383px; height: 56px; border: 1.500px solid #e6e6e6; border-radius: 6px; display: flex; align-items: center; padding-left: 22px; gap: 16px; font-size: 18px; letter-spacing: .5px; color: #666; }
.search-ic { width: 22px; height: 22px; }
.add-asset { width: 198px; height: 56px; background: #d9e6fb; border-radius: 6px; display: flex; align-items: center; justify-content: center; gap: 14px; color: #2660cc; font-size: 18px; }
.table { margin-top: 40px; }
.t-row { display: flex; align-items: center; border-bottom: 2px solid #e8e8e8; color: #111; font-size: 18.500px; letter-spacing: .2px; }
.t-head { height: 71px; padding-top: 4px; }
.t-body { height: 93px; }
.c-asset { width: 646px; padding-left: 88px; display: flex; align-items: center; flex: none; }
.c-bal { width: 183px; flex: none; }
.c-price { width: 148px; display: flex; align-items: center; flex: none; }
.c-act { flex: 1; }
.funnel { width: 16px; height: 16px; margin-left: 10px; }
.asset-logo { width: 49px; height: 48px; color: #000; }
.asset-name { margin-left: 17px; font-size: 18.500px; }
.verified { width: 20px; height: 20px; margin-left: 6px; }
.c-num { padding-left: 60px; font-size: 20px; }
.c-dash { padding-left: 64px; font-size: 20px; }
.c-links { display: flex; padding-left: 10px; gap: 68px; }
.link { display: flex; align-items: center; gap: 19px; color: #3867d6; }
.link-arrow { width: 18px; height: 20px; }

.scrolltrack { width: 8px; background: #fff; padding-top: 97px; flex: none; }
.scrollthumb { height: 590px; background: #c4c4c4; border-radius: 4px 0 0 0; }

/* downloads */
.downloads { height: 85px; background: #9fa9a0; display: flex; align-items: center; flex: none; padding-left: 32px; font: 18px "Open Sans", sans-serif; color: #2f3532; }
.dl { display: flex; align-items: center; }
.dl-first { width: 323px; height: 64px; border-right: 1px solid #a9b3aa; }
.dl-second { padding-left: 28px; }
.dl-ic { width: 18px; height: 24px; }
.pdf-label { font: 700 6.500px "Liberation Sans", sans-serif; fill: #fff; }
.dl-name { margin-left: 24px; }
.dl-first .dl-name { width: 239px; }
.dl-second .dl-name { width: 238px; }
.dl-up { width: 14px; height: 9px; }
.showall { margin: -2px 0 0 auto; width: 117px; height: 47px; border: 1px solid #4a5550; border-radius: 8px; font-size: 17px; display: flex; align-items: center; justify-content: center; }
.dl-x { width: 14px; height: 14px; margin: 0 20px; }

/* taskbar */
.taskbar { height: 72px; background: #1f1f1f; color: #fff; display: flex; align-items: center; flex: none; font: 17px "Open Sans", sans-serif; }
.weather { display: flex; align-items: center; padding-left: 30px; width: 468px; }
.wx { width: 36px; height: 38px; }
.wx-text { margin-left: 11px; line-height: 26px; font-size: 17px; }
.wx-sub { color: #d6d6d6; }
.tb-center { display: flex; align-items: center; }
.start { width: 35px; height: 35px; }
.tb-search { width: 150px; height: 48px; margin-left: 21px; border-radius: 24px; background: #2e2e2e; display: flex; align-items: center; justify-content: center; gap: 6px; }
.tb-apps { display: flex; margin-left: 4px; }
.app { width: 66px; height: 60px; display: flex; align-items: center; justify-content: center; position: relative; }
.app-ic { width: 36px; height: 36px; }
.pre-label { font: 700 8px "Liberation Sans", sans-serif; fill: #e6eef6; }
.ppt-label { font: 700 11px "Liberation Sans", sans-serif; fill: #fff; }
.dot { position: absolute; left: 50%; bottom: -3px; width: 9px; height: 6px; margin-left: -4px; border-radius: 3px; background: #8a8a8a; }
.dot-pink { background: #f5929c; }
.dot-wide { width: 24px; margin-left: -12px; background: #d69be0; }
.app-sticky { width: 54px; margin: 0 6px; background: #432527; border-radius: 8px; box-shadow: 6px 0 0 -2px #3a2123; }
.app-chrome { width: 54px; margin: 0 6px; background: #2e2e2e; border-radius: 8px; box-shadow: 6px 0 0 -2px #292929; }
.tray { margin-left: auto; display: flex; align-items: center; padding-right: 28px; text-align: center; }
.tray-caret { width: 20px; height: 12px; margin-right: 28px; }
.lang-box { font-size: 18px; line-height: 23px; margin-right: 24px; }
.tray-ic { width: 26px; height: 20px; margin-right: 10px; }
.clock { margin-left: 12px; text-align: right; line-height: 23px; }
```
